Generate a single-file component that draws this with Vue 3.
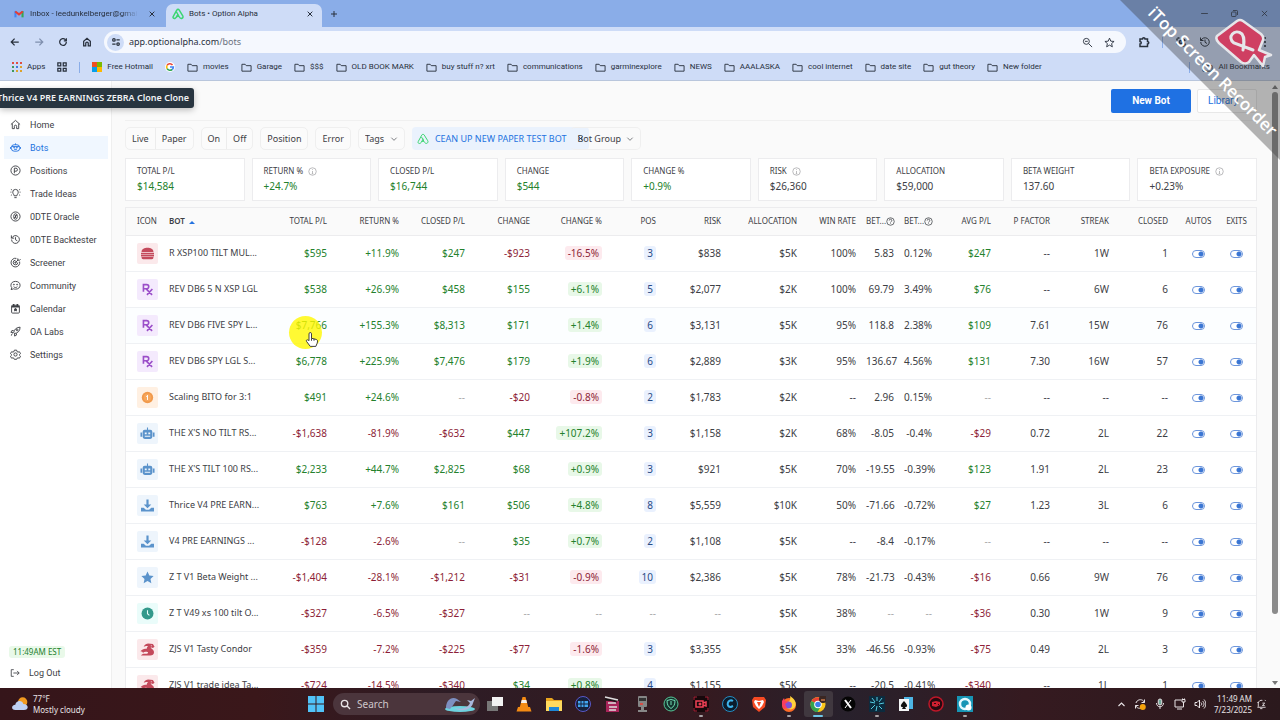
<script setup>
import { ref } from "vue";

// inner markup of the 24x24 line icons
const icons = {
  back: '<path d="M21 12H4M11 4l-8 8 8 8"/>',
  forward: '<path d="M3 12h17M13 4l8 8-8 8"/>',
  reload: '<path d="M20 12a8 8 0 1 1-2.5-5.8L20 9"/><path d="M20 3v6h-6"/>',
  house: '<path d="M4 21V10l8-7 8 7v11h-5v-6a3 3 0 0 0-6 0v6z"/>',
  site: '<circle cx="7" cy="7" r="3"/><path d="M13 7h8M3 17h8"/><circle cx="17" cy="17" r="3"/>',
  zoomOut: '<circle cx="9.500" cy="9.500" r="6.500"/><path d="M14.500 14.500L22 22M6.500 9.500h6"/>',
  star: '<path d="M12 2.500l2.800 6.600 7.200.6-5.400 4.700 1.600 7-6.200-3.700-6.200 3.700 1.600-7L2 9.700l7.200-.6z"/>',
  puzzle: '<path d="M4 6h5a2.500 2.500 0 0 1 5 0h5v5a2.500 2.500 0 0 1 0 5v5H4v-5a2.500 2.500 0 0 0 0-5z"/>',
  swirl: '<path d="M4 9V4h6M20 15v5h-6M4 14a8 8 0 0 0 4 5M20 10a8 8 0 0 0-5-6" stroke-dasharray="4 2"/><circle cx="12" cy="12" r="3"/>',
  history: '<path d="M3.500 12a8.500 8.500 0 1 0 2.500-6L3 9"/><path d="M3 3v6h6M12 7v5.500l4 2.500"/>',
  dots: '<g fill="currentColor" stroke="none"><circle cx="12" cy="4" r="2.200"/><circle cx="12" cy="12" r="2.200"/><circle cx="12" cy="20" r="2.200"/></g>',
  folder: '<path d="M2 5h7l2.500 3H22v12H2z"/>',
  close: '<path d="M5 5l14 14M19 5L5 19"/>',
  plus: '<path d="M12 3v18M3 12h18"/>',
  minus: '<path d="M3 12h18"/>',
  restore: '<rect x="4" y="8" width="12" height="12" rx="2"/><path d="M8 4h10a2 2 0 0 1 2 2v10"/>',
  chevron: '<path d="M4 8l8 8 8-8"/>',
  up: '<path d="M4 16l8-8 8 8"/>',
  alpha: '<path d="M12 2.500c-1 0-2 .7-2.500 1.700L2.500 17c-1.500 3 1.500 5 4 3.500 3-2 5-5 6-9M9 8l5 9c2 3.500 4 4.500 6 3.500s2.500-3 1.500-5l-7-11.300c-.6-1-1.500-1.700-2.500-1.700M8 16.500h6"/>',
  home: '<path d="M2 12l10-9 10 9M5 10v11h4.500v-5a2.500 2.500 0 0 1 5 0v5H19V10"/>',
  bots: '<rect x="3" y="6" width="18" height="14" rx="6"/><path d="M1 11v4M23 11v4M12 3v3M4 10h16M9 16h6"/><circle cx="9" cy="12.500" r="1"/><circle cx="15" cy="12.500" r="1"/>',
  positions: '<circle cx="12" cy="12" r="10"/><path d="M9.500 18V7H13a3 3 0 0 1 0 6.500H9.500"/>',
  ideas: '<path d="M9 17c0-3-3-4-3-8a6 6 0 0 1 12 0c0 4-3 5-3 8zM9.500 21h5M1 9h2M21 9h2M2 3l2 1M22 3l-2 1M2 16l2-1M22 16l-2-1"/>',
  oracle: '<circle cx="12" cy="12" r="10"/><ellipse cx="12" cy="12" rx="4" ry="6"/><path d="M12 9v6M15 8l-6 8"/>',
  screener: '<path d="M21 10a9.500 9.500 0 1 1-7-7M17 12a5 5 0 1 1-5-5M12 12l6-6M17 3v4h4l2-2"/><circle cx="12" cy="12" r="1.500"/>',
  community: '<path d="M12 3c6 0 10 3.500 10 8.500S18 20 12 20c-1.500 0-3-.2-4.300-.8L2.500 21l1.300-4.500C2.600 15 2 13.500 2 11.500 2 6.500 6 3 12 3zM8 14.500c2 2.500 6 2.500 8 0"/><circle cx="8.500" cy="10" r="1"/><circle cx="15.500" cy="10" r="1"/>',
  calendar: '<rect x="3.500" y="5" width="17" height="17" rx="2"/><path d="M3.500 8h17M8 2v4M16 2v4" stroke-width="3.500"/><path fill="currentColor" d="M12 11.500l1 2 2 .3-1.500 1.400.4 2.200-1.900-1-1.900 1 .4-2.200L9 13.800l2-.3z"/>',
  labs: '<path d="M8 15c1-7 5-12 14-12.500C22 11 17 15.500 9.500 16.500zM8 10H4l-2 4h5M14 16v4l-4 2v-5M3 21c0-3 1-4 3-4"/><circle cx="15.500" cy="8.500" r="2"/>',
  settings: '<circle cx="12" cy="12" r="3.500"/><path d="M9.500 2.500h5l.7 3 2.300 1.300 3-.9 2.500 4.200-2.300 2.200v1.400l2.300 2.200-2.500 4.200-3-.9-2.300 1.300-.7 2h-5l-.7-2-2.300-1.300-3 .9L1 15.900l2.300-2.200v-1.400L1 10.100l2.500-4.200 3 .9 2.300-1.300z"/>',
  logout: '<path d="M9 4H3v16h6M8 12h14M17 7l5 5-5 5"/>',
  info: '<circle cx="12" cy="12" r="10"/><path d="M12 10.500V18M12 6v2M10 18h4"/>',
  help: '<circle cx="12" cy="12" r="10"/><path d="M8.500 9.500a3.500 3.500 0 1 1 4.500 3.200c-.8.400-1 .8-1 1.800M12 17v1.500"/>',
  search: '<circle cx="10" cy="10" r="7"/><path d="M15.500 15.500L22 22"/>',
  sync: '<path d="M4 10a9 9 0 0 1 15-4l2 3M20 14a9 9 0 0 1-15 4l-2-3M21 3v6h-6M3 21v-6h6"/><circle cx="17.500" cy="18" r="6" fill="#f5a30b" stroke="none"/>',
  mic: '<rect x="8.500" y="2" width="7" height="12" rx="3.500" fill="#74a99b"/><path d="M5 10c0 10 14 10 14 0M12 18v4"/>',
  screen: '<path d="M15 4H2v14h17v-6M6 22h10"/><path d="M19 12V8M16 3v5h6V3zM17 1v2M21 1v2"/>',
  sound: '<path d="M2 9v6h4l5 5V4L6 9zM14 9c2 2 2 4 0 6M17 6c4 4 4 8 0 12M20 3c5 6 5 12 0 18"/>',
  bell: '<path d="M5 17V9a7 7 0 0 1 9-6M3 18h18M9 21h5M14 9h5l-5 5h5M19 2l2 2M5 9l-2-2"/>',
};

// filled pictures for the bot tiles
const tiles = {
  burger: '<path d="M1 9C1-1 23-1 23 9zM0 10.500h24v3H0zM0 14.500h24v3H0zM1 18.500h22c0 3-1 4-3 4H4c-2 0-3-1-3-4z"/>',
  rx: '<g fill="none" stroke="currentColor" stroke-width="3"><path d="M4.500 16V3h6a3.500 3.500 0 0 1 0 7.500h-6M9 10.500L20.500 22M21 11L11 22"/></g>',
  coin: '<circle cx="12" cy="12" r="10.500"/><circle cx="12" cy="12" r="7" fill="#f7a75c"/><path d="M12 7.500v9M9.500 10.500l2.500-2" stroke="#fff" stroke-width="1.800"/>',
  robot: '<path d="M11 1h2v4h4a4 4 0 0 1 4 4v9a4 4 0 0 1-4 4H7a4 4 0 0 1-4-4V9a4 4 0 0 1 4-4h4zM-1 10h3v8h-3zM22 10h3v8h-3z"/><path fill="#eef5fc" d="M7 10h3.500v3.500H7zM13.500 10H17v3.500h-3.500zM7 16h10v2H7z"/>',
  download: '<path d="M10 1h4v9h5l-7 7-7-7h5zM0 16h5l4 4h6l4-4h5v7H0z"/>',
  star: '<path d="M12 1l3.400 7.200 7.900 1-5.800 5.400 1.600 7.900-7.100-4-7.100 4 1.600-7.900L.7 9.200l7.900-1z"/>',
  clock: '<circle cx="12" cy="12" r="11"/><path d="M12 6v6.500l3.500 3" fill="none" stroke="#eafcfa" stroke-width="2"/>',
  dragon: '<path d="M13 1l9 1 3 5-3 2-4-1c0 3 6 4 6 9 0 4-3 6-7 6H0c2-3 5-4 8-3 4 0 5-1 5-3-4-1-7-1-9 1-1-1-2-3-5-3 3-3 7-5 11-4 1-2 1-4 3-5-3-1-6 1-8 1 1-3 3-5 8-6z"/><circle cx="19" cy="5" r="1" fill="#fbe9eb"/>',
};

const toolbarIcons = ["back", "forward", "reload", "house"];

const bookmarks = [
  "movies", "Garage", "$$$", "OLD BOOK MARK", "buy stuff n? xrt", "communications", "garminexplore",
  "NEWS", "AAALASKA", "cool internet", "date site", "gut theory", "New folder",
];

const menu = [
  { icon: "home", text: "Home" },
  { icon: "bots", text: "Bots", active: true },
  { icon: "positions", text: "Positions" },
  { icon: "ideas", text: "Trade Ideas" },
  { icon: "oracle", text: "0DTE Oracle" },
  { icon: "history", text: "0DTE Backtester" },
  { icon: "screener", text: "Screener" },
  { icon: "community", text: "Community" },
  { icon: "calendar", text: "Calendar" },
  { icon: "labs", text: "OA Labs" },
  { icon: "settings", text: "Settings" },
];

const cards = [
  { label: "TOTAL P/L", value: "$14,584", up: true },
  { label: "RETURN %", value: "+24.7%", up: true, info: true },
  { label: "CLOSED P/L", value: "$16,744", up: true },
  { label: "CHANGE", value: "$544", up: true },
  { label: "CHANGE %", value: "+0.9%", up: true },
  { label: "RISK", value: "$26,360", info: true },
  { label: "ALLOCATION", value: "$59,000" },
  { label: "BETA WEIGHT", value: "137.60" },
  { label: "BETA EXPOSURE", value: "+0.23%", info: true },
];

const columns = [
  { text: "TOTAL P/L", type: "money", width: 59 },
  { text: "RETURN %", type: "money", width: 72 },
  { text: "CLOSED P/L", type: "money", width: 66 },
  { text: "CHANGE", type: "money", width: 65 },
  { text: "CHANGE %", type: "change", width: 72 },
  { text: "POS", type: "pos", width: 54 },
  { text: "RISK", type: "risk", width: 65 },
  { text: "ALLOCATION", type: "plain", width: 76 },
  { text: "WIN RATE", type: "plain", width: 59 },
  { text: "BET...", type: "beta", width: 38 },
  { text: "BET...", type: "beta", width: 38 },
  { text: "AVG P/L", type: "money", width: 59 },
  { text: "P FACTOR", type: "plain", width: 59 },
  { text: "STREAK", type: "plain", width: 59 },
  { text: "CLOSED", type: "plain", width: 59 },
];

const bots = ref([
  { tile: "burger", color: "red", name: "R XSP100 TILT MUL...", values: ["$595", "+11.9%", "$247", "-$923", "-16.5%", "3", "$838", "$5K", "100%", "5.83", "0.12%", "$247", "--", "1W", "1"] },
  { tile: "rx", color: "purple", name: "REV DB6 5 N XSP LGL", values: ["$538", "+26.9%", "$458", "$155", "+6.1%", "5", "$2,077", "$2K", "100%", "69.79", "3.49%", "$76", "--", "6W", "6"] },
  { tile: "rx", color: "purple", name: "REV DB6 FIVE SPY L...", hover: true, values: ["$7,766", "+155.3%", "$8,313", "$171", "+1.4%", "6", "$3,131", "$5K", "95%", "118.8", "2.38%", "$109", "7.61", "15W", "76"] },
  { tile: "rx", color: "purple", name: "REV DB6 SPY LGL S...", values: ["$6,778", "+225.9%", "$7,476", "$179", "+1.9%", "6", "$2,889", "$3K", "95%", "136.67", "4.56%", "$131", "7.30", "16W", "57"] },
  { tile: "coin", color: "orange", name: "Scaling BITO for 3:1", values: ["$491", "+24.6%", "--", "-$20", "-0.8%", "2", "$1,783", "$2K", "--", "2.96", "0.15%", "--", "--", "--", "--"] },
  { tile: "robot", color: "blue", name: "THE X'S NO TILT RS...", values: ["-$1,638", "-81.9%", "-$632", "$447", "+107.2%", "3", "$1,158", "$2K", "68%", "-8.05", "-0.4%", "-$29", "0.72", "2L", "22"] },
  { tile: "robot", color: "blue", name: "THE X'S TILT 100 RS...", values: ["$2,233", "+44.7%", "$2,825", "$68", "+0.9%", "3", "$921", "$5K", "70%", "-19.55", "-0.39%", "$123", "1.91", "2L", "23"] },
  { tile: "download", color: "blue", name: "Thrice V4 PRE EARN...", values: ["$763", "+7.6%", "$161", "$506", "+4.8%", "8", "$5,559", "$10K", "50%", "-71.66", "-0.72%", "$27", "1.23", "3L", "6"] },
  { tile: "download", color: "blue", name: "V4 PRE EARNINGS ...", values: ["-$128", "-2.6%", "--", "$35", "+0.7%", "2", "$1,108", "$5K", "--", "-8.4", "-0.17%", "--", "--", "--", "--"] },
  { tile: "star", color: "blue", name: "Z T V1 Beta Weight ...", values: ["-$1,404", "-28.1%", "-$1,212", "-$31", "-0.9%", "10", "$2,386", "$5K", "78%", "-21.73", "-0.43%", "-$16", "0.66", "9W", "76"] },
  { tile: "clock", color: "teal", name: "Z T V49 xs 100 tilt O...", values: ["-$327", "-6.5%", "-$327", "--", "--", "--", "--", "$5K", "38%", "--", "--", "-$36", "0.30", "1W", "9"] },
  { tile: "dragon", color: "red", name: "ZJS V1 Tasty Condor", values: ["-$359", "-7.2%", "-$225", "-$77", "-1.6%", "3", "$3,355", "$5K", "33%", "-46.56", "-0.93%", "-$75", "0.49", "2L", "3"] },
  { tile: "dragon", color: "red", name: "ZJS V1 trade idea Ta...", values: ["-$724", "-14.5%", "-$340", "$34", "+0.8%", "4", "$1,155", "$5K", "--", "-20.5", "-0.41%", "-$340", "--", "1L", "1"] },
].map((bot) => ({ ...bot, autos: true, exits: true })));

const valueClass = (value, type) => {
  if (value === "--") return type === "plain" ? "" : "none";
  if (type === "money" || type === "change") {
    return [value.startsWith("-") ? "loss" : "gain", type === "change" ? "pill" : ""];
  }
  return type === "pos" ? "pill count" : "";
};

// pinned programs, drawn on a 16x16 grid
const apps = [
  { name: "Task view", art: '<path fill="#777" d="M0 5h11v10H0z"/><path fill="#f2f2f2" d="M5 1h11v9H5z"/>' },
  { name: "VLC", art: '<path fill="#f48b13" d="M6.500 1h3l3 11h-9z"/><path fill="#f5f0ea" d="M5.700 4h4.600l.8 3H4.900z"/><path fill="#f48b13" d="M2 11h12l1.500 4.500H.5z"/>' },
  { name: "File Explorer", art: '<path fill="#e9a51e" d="M0 2h6l2 2h8v11H0z"/><path fill="#ffda5e" d="M0 5h16v10H0z"/><path fill="#1e88d8" d="M3 11h10v4H3z"/>' },
  { name: "Media", art: '<circle cx="8" cy="8" r="7.500" fill="#16213c" stroke="#5959c9"/><path fill="#42a5f0" d="M3 5h10v6H3z"/><path stroke="#16213c" d="M6 5v6M9 5v6M3 8h10"/>' },
  { name: "Editor", art: '<path fill="#a82459" d="M2 5h13v11H2z"/><path stroke="#ddd" stroke-width="1.500" fill="none" d="M1 1l13 3M4 7h8M5 11h8M5 14h7"/><path stroke="#111" d="M1 3l12 3"/>' },
  { name: "Recorder", art: '<rect x="4" y="0" width="9" height="11" rx="1" fill="#858585"/><path fill="#333" d="M5 2h7v3H5z"/><path fill="#d64c46" d="M6 7h3v2H6z"/><path fill="#888" d="M7 11h3v3h3v2H4v-2h3z"/>' },
  { name: "Shield", art: '<circle cx="8" cy="8" r="7" fill="#15332d" stroke="#55c797"/><path fill="none" stroke="#72dfb5" d="M4 4.500l4-1 4 1c0 4-1 6-4 8-3-2-4-4-4-8zM8 5v4"/>' },
  { name: "Screen recorder", running: true, art: '<rect width="16" height="16" rx="3" fill="#17080b"/><path fill="none" stroke="#a92338" d="M1 4V1h3M12 1h3v3M1 12v3h3M12 15h3v-3"/><path fill="none" stroke="#ef4055" stroke-width="1.500" d="M3 5h7v6H3zM10 7l3-1v4l-3-1"/><circle cx="7" cy="8" r="1.500" fill="#ef4055"/>' },
  { name: "Cleaner", art: '<circle cx="8" cy="8" r="7.500" fill="#0b1c2c" stroke="#258dc2"/><path fill="none" stroke="#3eb4ed" stroke-width="2" d="M11 5c-5-3-8 6-2 6l2-1"/>' },
  { name: "Brave", art: '<path fill="#f64a23" d="M3 1h10l2 3-1 7-6 5-6-5-1-7z"/><path fill="#fff" d="M4 4l4 1 4-1 1 2-2 4-3 3-3-3-2-4z"/><path fill="#f64a23" d="M6 6h4L8 11z"/>' },
  { name: "Firefox", running: true, art: '<circle cx="8" cy="9" r="7" fill="#ff6b26"/><path fill="#ffd23c" d="M9 0c5 3 7 7 5 11-2 3-6 3-8 1l4-3-4-3c2 0 4-2 3-6z"/><circle cx="7.500" cy="9" r="3.500" fill="#8152d8"/><path fill="#fa3d62" d="M1 5l2-3 1 3 3 1-3 2 2 4-3 1C1 11 1 8 1 5z"/>' },
  { name: "Chrome", running: true, current: true, art: '<circle cx="8" cy="8.500" r="7.500" fill="#fbc61b"/><path fill="#e94235" d="M8 8.500L1.500 5A7.500 7.500 0 0 1 14.500 5z"/><path fill="#34a350" d="M8 8.500L1.500 5c-3 5 1 11 6 11l3-5z"/><circle cx="8" cy="8.500" r="3.800" fill="#fff"/><circle cx="8" cy="8.500" r="2.800" fill="#3e7ee8"/><circle cx="13" cy="3" r="4" fill="#3a2723"/><path fill="#a5623c" d="M11 3h4v2h-4z"/>' },
  { name: "X", art: '<circle cx="8" cy="8" r="7.500" fill="#050505"/><path stroke="#fff" stroke-width="2" d="M5 4l6 8"/><path stroke="#fff" d="M11 4l-6 8"/>' },
  { name: "Spark", running: true, art: '<path fill="#0c2b3e" d="M0 0h16v16H0z"/><path stroke="#54cbe2" d="M8 1v4M13 2l-3 4M15 7l-5 1M13 13l-3-3M7 15l1-5M2 13l4-4M1 6l5 1M3 2l3 4"/>' },
  { name: "Solitaire", art: '<path fill="#4db5e5" d="M6 1h9v12H6z"/><path fill="#f4f6f7" d="M1 3h10v12H1z"/><path fill="#111" d="M6 5c4 4 4 6 1 6l1 2H4l1-2c-3 0-3-2 1-6z"/>' },
  { name: "Game", art: '<circle cx="8" cy="8" r="7" fill="#26090f" stroke="#bd1728" stroke-width="1.500"/><path fill="#ce2031" d="M4 6l4-1 4 1v3l-4 2-4-1z"/><path fill="#26090f" d="M6 7h2v1H6zM10 8h1v1h-1z"/>' },
  { name: "Capture", running: true, art: '<path fill="#1795b5" d="M0 0h16v16H0z"/><circle cx="8" cy="8" r="5" fill="none" stroke="#e5f9ff" stroke-width="2.500"/><circle cx="11.500" cy="11.500" r="3" fill="#fff"/>' },
];
</script>

<template>
  <div class="desktop">
    <header class="browser">
      <div class="tabs">
        <div class="tab">
          <svg class="tab-icon" viewBox="0 0 24 24"><path fill="#4285f4" d="M1 5h5v15H1z" /><path fill="#34a853" d="M18 5h5v15h-5z" /><path fill="none" stroke="#e43d35" stroke-width="5" d="M3 6l9 7 9-7" /></svg>
          <span class="tab-title fade">Inbox - leedunkelberger@gmail</span>
          <button class="bare" aria-label="Close tab"><svg class="line heavy s8" viewBox="0 0 24 24" v-html="icons.close" /></button>
        </div>
        <div class="tab current">
          <svg class="line heavy alpha s12" viewBox="0 0 24 24" v-html="icons.alpha" />
          <span class="tab-title">Bots • Option Alpha</span>
          <button class="bare" aria-label="Close tab"><svg class="line heavy s8" viewBox="0 0 24 24" v-html="icons.close" /></button>
        </div>
        <button class="bare new-tab" aria-label="New tab"><svg class="line heavy s8" viewBox="0 0 24 24" v-html="icons.plus" /></button>
        <div class="window-buttons">
          <button v-for="name in ['minus', 'restore', 'close']" :key="name" class="bare" :aria-label="name"><svg class="line s9" viewBox="0 0 24 24" v-html="icons[name]" /></button>
        </div>
      </div>
      <div class="toolbar">
        <button v-for="name in toolbarIcons" :key="name" :class="['bare', 'nav-button', name]" :aria-label="name"><svg class="line heavy s10" viewBox="0 0 24 24" v-html="icons[name]" /></button>
        <div class="address">
          <span class="site"><svg class="line heavy s10" viewBox="0 0 24 24" v-html="icons.site" /></span>
          <span class="url">app.optionalpha.com<i>/bots</i></span>
          <svg class="line s11" viewBox="0 0 24 24" v-html="icons.zoomOut" />
          <svg class="line s11" viewBox="0 0 24 24" v-html="icons.star" />
        </div>
        <div class="extensions">
          <svg class="line heavy s12" viewBox="0 0 24 24" v-html="icons.puzzle" />
          <span class="divider"></span>
          <svg class="line heavy s12" viewBox="0 0 24 24" v-html="icons.swirl" />
          <svg class="line s12" viewBox="0 0 24 24" v-html="icons.history" />
          <span class="avatar"></span>
          <svg class="line s12" viewBox="0 0 24 24" v-html="icons.dots" />
        </div>
      </div>
      <nav class="bookmarks">
        <a href="#" class="apps-link">
          <svg class="s10" viewBox="0 0 10 10"><path fill="#de4d43" d="M0 0h2v2H0zM4 0h2v2H4zM8 0h2v2H8z" /><path fill="#3f9a5c" d="M0 4h2v2H0zM0 8h2v2H0z" /><path fill="#3f7de0" d="M4 4h2v2H4z" /><path fill="#dca22b" d="M8 4h2v2H8zM4 8h2v2H4zM8 8h2v2H8z" /></svg>
          Apps
        </a>
        <svg class="line heavy s10" viewBox="0 0 24 24"><path d="M2 2h7v7H2zM15 2h7v7h-7zM2 15h7v7H2zM15 15h7v7h-7z" /></svg>
        <span class="divider"></span>
        <a href="#">
          <svg class="s10" viewBox="0 0 10 10"><path fill="#f05022" d="M0 0h5v5H0z" /><path fill="#7dba00" d="M5 0h5v5H5z" /><path fill="#069fec" d="M0 5h5v5H0z" /><path fill="#fdb800" d="M5 5h5v5H5z" /></svg>
          Free Hotmail
        </a>
        <a href="#" aria-label="Google">
          <svg class="s10" viewBox="0 0 24 24"><circle cx="12" cy="12" r="12" fill="#fff" /><g fill="none" stroke-width="4"><path stroke="#e94235" d="M18 7A8 8 0 0 0 5 8" /><path stroke="#fbbc04" d="M5 8a8 8 0 0 0 0 8" /><path stroke="#34a853" d="M5 16a8 8 0 0 0 12 2" /><path stroke="#4285f4" d="M17 18c2-1 3-3 3-6h-8" /></g></svg>
        </a>
        <a v-for="name in bookmarks" :key="name" href="#">
          <svg class="line s11" viewBox="0 0 24 24" v-html="icons.folder" />
          {{ name }}
        </a>
        <span class="divider last"></span>
        <a href="#"><svg class="line s11" viewBox="0 0 24 24" v-html="icons.folder" />All Bookmarks</a>
      </nav>
    </header>

    <div class="page">
      <aside class="sidebar">
        <nav>
          <a v-for="item in menu" :key="item.text" href="#" :class="{ active: item.active }">
            <svg class="line s11" viewBox="0 0 24 24" v-html="icons[item.icon]" />
            {{ item.text }}
          </a>
        </nav>
        <div class="sidebar-foot">
          <span class="clock">11:49AM EST</span>
          <a href="#"><svg class="line s10" viewBox="0 0 24 24" v-html="icons.logout" />Log Out</a>
        </div>
      </aside>

      <main class="main">
        <div class="actions">
          <button class="new-bot">New Bot</button>
          <button class="library">Library</button>
        </div>

        <div class="filters">
          <div class="group"><button>Live</button><button>Paper</button></div>
          <div class="group"><button>On</button><button>Off</button></div>
          <div class="group"><button>Position</button></div>
          <div class="group"><button>Error</button></div>
          <label class="group drop">
            <select aria-label="Tags"><option>Tags</option></select>
            <svg class="line s8" viewBox="0 0 24 24" v-html="icons.chevron" />
          </label>
          <div class="chip-pair">
            <div class="chip">
              <svg class="line alpha s12" viewBox="0 0 24 24" v-html="icons.alpha" />
              <span>CEAN UP NEW PAPER TEST BOT</span>
              <button class="bare" aria-label="Remove"><svg class="line heavy s7" viewBox="0 0 24 24" v-html="icons.close" /></button>
            </div>
            <label class="group drop bot-group">
              <select aria-label="Bot Group"><option>Bot Group</option></select>
              <svg class="line s8" viewBox="0 0 24 24" v-html="icons.chevron" />
            </label>
          </div>
        </div>

        <div class="cards">
          <div v-for="card in cards" :key="card.label" class="card">
            <div class="card-label">{{ card.label }}<svg v-if="card.info" class="line s9" viewBox="0 0 24 24" v-html="icons.info" /></div>
            <div :class="['card-value', { gain: card.up }]">{{ card.value }}</div>
          </div>
        </div>

        <div class="table-box">
          <table>
            <colgroup>
              <col :style="{ width: '43px' }" />
              <col :style="{ width: '99px' }" />
              <col v-for="(column, i) in columns" :key="i" :style="{ width: column.width + 'px' }" />
              <col :style="{ width: '49px' }" />
              <col :style="{ width: '39px' }" />
            </colgroup>
            <thead>
              <tr>
                <th class="icon-cell">ICON</th>
                <th class="name-cell sorted">BOT <i class="sort"></i></th>
                <th v-for="(column, i) in columns" :key="i" :class="'col-' + column.type">
                  {{ column.text }}<svg v-if="column.type === 'beta'" class="line s9" viewBox="0 0 24 24" v-html="icons.help" />
                </th>
                <th class="toggle-cell autos">AUTOS</th>
                <th class="toggle-cell">EXITS</th>
              </tr>
            </thead>
            <tbody>
              <tr v-for="bot in bots" :key="bot.name" :class="{ hover: bot.hover }">
                <td class="icon-cell"><span :class="['tile', bot.color]"><svg viewBox="0 0 24 24" v-html="tiles[bot.tile]" /></span></td>
                <td class="name-cell">{{ bot.name }}</td>
                <td v-for="(value, i) in bot.values" :key="i" :class="'col-' + columns[i].type">
                  <span :class="valueClass(value, columns[i].type)">{{ value }}</span>
                </td>
                <td class="toggle-cell autos"><input v-model="bot.autos" type="checkbox" :aria-label="bot.name + ' autos'" /></td>
                <td class="toggle-cell"><input v-model="bot.exits" type="checkbox" :aria-label="bot.name + ' exits'" /></td>
              </tr>
            </tbody>
          </table>
        </div>
      </main>

      <div class="scrollbar"><i class="arrow-up"></i><div class="track"><div class="thumb"></div></div><i class="arrow-down"></i></div>

      <div class="tooltip"><span>Thrice V4 PRE EARNINGS ZEBRA Clone Clone</span></div>
      <div class="pointer">
        <svg viewBox="0 0 24 24"><path fill="#fff" stroke="#333" stroke-width="1.500" d="M8 14V3c0-3 4-3 4 0v7l8 2c2 1 2 3 1 6l-2 5h-9l-6-8c-1-2 1-4 4-1zM12 10v4M16 11v3" /></svg>
      </div>
    </div>

    <footer class="taskbar">
      <div class="weather">
        <svg viewBox="0 0 24 24"><circle cx="16" cy="9" r="7" fill="#f29a20" /><path fill="#bfd0f3" d="M5 21c-7 0-6-8 0-8 1-7 11-7 12-1 8 0 9 9 1 9z" /></svg>
        <div>77°F<br />Mostly cloudy</div>
      </div>
      <div class="task-center">
        <button class="bare start" aria-label="Start"><svg viewBox="0 0 16 16"><path fill="#51c3f8" d="M0 0h7.500v7.500H0zM8.500 0H16v7.500H8.500zM0 8.500h7.500V16H0zM8.500 8.500H16V16H8.500z" /></svg></button>
        <label class="task-search">
          <svg class="line heavy s11" viewBox="0 0 24 24" v-html="icons.search" />
          <input type="text" placeholder="Search" aria-label="Search" />
          <svg class="dolphin" viewBox="0 0 32 16"><ellipse cx="16" cy="13" rx="15" ry="3" fill="#6dd3df" /><path fill="#7d8fc0" d="M2 12c0-7 5-12 11-9l4 3-5-1c-2 2-3 5-6 8z" /><path fill="#a9b9dd" d="M10 12c7 2 14 0 16-5l-3-3 4 1 4-3-2 5c-1 6-10 10-19 5z" /></svg>
        </label>
        <div class="pinned">
          <button v-for="app in apps" :key="app.name" :class="['bare', { running: app.running, current: app.current }]" :aria-label="app.name">
            <svg viewBox="0 0 16 16" v-html="app.art" />
          </button>
        </div>
      </div>
      <div class="tray">
        <svg class="line heavy s9" viewBox="0 0 24 24" v-html="icons.up" />
        <svg class="line s12" viewBox="0 0 24 24" v-html="icons.sync" />
        <svg class="line s12" viewBox="0 0 24 24" v-html="icons.mic" />
        <svg class="line s12" viewBox="0 0 24 24" v-html="icons.screen" />
        <svg class="line s12" viewBox="0 0 24 24" v-html="icons.sound" />
        <div class="time">11:49 AM<br />7/23/2025</div>
        <svg class="line s11" viewBox="0 0 24 24" v-html="icons.bell" />
      </div>
    </footer>

    <svg class="ribbon" viewBox="0 0 160 160">
      <path d="M0 0h160v160z" fill="#333" fill-opacity=".36" />
      <g transform="translate(120 43)">
        <path fill="#cf3f62" stroke="#e6e6ea" stroke-width="2.500" stroke-linejoin="round" d="M-3-22Q0-24 3-22L21-9Q24-6 23-3l-4 10 12 5-6 2-2 9-9-11-5 7Q5 22 1 19l-22-19q-4-4-2-7z" />
        <path fill="none" stroke="#e6e6ea" stroke-width="3" stroke-linecap="round" d="M13 7L-6 0c-8-6 1-15 8-9 3 4 2 10 1 16" />
      </g>
      <text transform="translate(27 14) rotate(45)">iTop Screen Recorder</text>
    </svg>
  </div>
</template>

<style>
body {
  margin: 0;
  overflow: hidden;
}
</style>

<style scoped>
.desktop {
  position: relative;
  display: flex;
  flex-direction: column;
  height: 100vh;
  overflow: hidden;
  font-family: "Noto Sans", sans-serif;
  font-size: 10px;
  line-height: 12px;
  color: #3d4045;
  background: #fafafa;
}

.desktop * {
  box-sizing: border-box;
}

svg {
  display: block;
  flex: none;
}

a {
  color: inherit;
  text-decoration: none;
}

button,
select,
input {
  font: inherit;
  color: inherit;
}

.bare {
  display: flex;
  align-items: center;
  justify-content: center;
  padding: 0;
  border: 0;
  background: none;
}

.line {
  fill: none;
  stroke: currentColor;
  stroke-width: 2;
}

.heavy {
  stroke-width: 3;
}

.s7 { width: 7px; height: 7px; }
.s8 { width: 8px; height: 8px; }
.s9 { width: 9px; height: 9px; }
.s10 { width: 10px; height: 10px; }
.s11 { width: 11px; height: 11px; }
.s12 { width: 12px; height: 12px; }

.alpha {
  color: #3bd671;
}

/* Browser */
.browser {
  flex: none;
  height: 81px;
  background: #cedcf7;
  border-bottom: 1px solid #b9c6dc;
  color: #28303d;
  font-family: Roboto, sans-serif;
  font-size: 8px;
}

.tabs {
  display: flex;
  align-items: center;
  height: 27px;
  background: #8aade8;
}

.tab {
  display: flex;
  align-items: center;
  gap: 6px;
  width: 166px;
  height: 23px;
  margin-top: 4px;
  padding: 0 10px 4px 14px;
}

.tab.current {
  width: 156px;
  padding: 0 8px 4px 6px;
  gap: 5px;
  border-radius: 7px 7px 0 0;
  background: #cedcf7;
}

.tab-icon {
  width: 10px;
  height: 10px;
}

.tab-title {
  flex: 1;
  overflow: hidden;
  white-space: nowrap;
}

.fade {
  margin-right: 4px;
  mask-image: linear-gradient(90deg, #000 85%, transparent);
}

.new-tab {
  margin-left: 8px;
}

.window-buttons {
  display: flex;
  gap: 21px;
  margin-left: auto;
  padding-right: 11px;
}

.toolbar {
  display: flex;
  align-items: center;
  height: 30px;
}

.nav-button {
  width: 24px;
  height: 24px;
}

.nav-button.back {
  margin-left: 3px;
}

.nav-button.forward {
  color: #7f8fae;
}

.nav-button.house {
  margin-right: 5px;
}

.address {
  display: flex;
  flex: 1;
  align-items: center;
  gap: 11px;
  height: 22px;
  padding: 0 11px 0 3px;
  border-radius: 11px;
  background: #f5f8fe;
}

.site {
  display: flex;
  align-items: center;
  justify-content: center;
  width: 17px;
  height: 17px;
  border-radius: 50%;
  background: #cedcf7;
}

.url {
  flex: 1;
  margin-left: -6px;
  font-family: "Noto Sans", sans-serif;
  font-size: 9px;
}

.url i {
  font-style: normal;
  color: #6b727e;
}

.extensions {
  display: flex;
  align-items: center;
  gap: 12px;
  margin-left: 12px;
  padding-right: 9px;
}

.divider {
  width: 1px;
  height: 11px;
  background: #8aade8;
}

.avatar {
  width: 14px;
  height: 14px;
  margin: 0 -2px 0 12px;
  border-radius: 50%;
  background: #b52f36;
}

.bookmarks {
  display: flex;
  align-items: center;
  gap: 12px;
  height: 20px;
  padding: 0 10px 0 12px;
  white-space: nowrap;
}

.bookmarks a {
  display: flex;
  align-items: center;
  gap: 5px;
}

.bookmarks .divider.last {
  margin-left: auto;
}

/* Page */
.page {
  position: relative;
  display: flex;
  flex: 1;
  min-height: 0;
  overflow: hidden;
}

.sidebar {
  display: flex;
  flex: none;
  flex-direction: column;
  width: 112px;
  padding: 32px 3px 4px 4px;
  border-right: 1px solid #efefef;
  background: #fff;
}

.sidebar a {
  display: flex;
  align-items: center;
  gap: 9px;
  height: 23px;
  padding-left: 6px;
  white-space: nowrap;
  font-family: Roboto, sans-serif;
  font-size: 9px;
}

.sidebar a.active {
  background: #f0f7ff;
  color: #2473e0;
}

.sidebar-foot {
  display: flex;
  flex-direction: column;
  align-items: flex-start;
  gap: 3px;
  margin-top: auto;
}

.clock {
  margin-left: 5px;
  padding: 0 4px;
  border-radius: 3px;
  background: #e9f9e9;
  color: #22802b;
  font-size: 8px;
  white-space: nowrap;
}

.main {
  display: flex;
  flex: 1;
  flex-direction: column;
  min-width: 0;
  padding: 0 13px;
}

.actions {
  display: flex;
  flex: none;
  gap: 6px;
  justify-content: flex-end;
  height: 40px;
  padding-top: 8px;
  border-bottom: 1px solid #f0f0f0;
  font-family: Roboto, sans-serif;
}

.actions button {
  height: 24px;
  padding: 0;
  border-radius: 2px;
}

.new-bot {
  width: 80px;
  border: 0;
  background: #1f71e3;
  color: #fff;
  font-weight: 700;
}

.actions .library {
  width: 60px;
  padding-left: 10px;
  border: 1px solid #e8e8e8;
  background: #fff;
  color: #2473e0;
  text-align: left;
}

.filters {
  display: flex;
  flex: none;
  gap: 7px;
  margin: 6px 0 8px;
  font-size: 9px;
  white-space: nowrap;
}

.group {
  display: flex;
  align-items: center;
  height: 23px;
  border: 1px solid #efefef;
  border-radius: 5px;
  background: #fbfbfb;
}

.group button {
  height: 21px;
  padding: 0 6px;
  border: 0;
  background: none;
}

.group button + button {
  border-left: 1px solid #ececec;
}

.drop {
  gap: 5px;
  padding: 0 6px;
}

.drop select {
  padding: 0;
  border: 0;
  appearance: none;
  background: none;
}

.chip-pair {
  display: flex;
}

.chip {
  display: flex;
  align-items: center;
  gap: 6px;
  height: 23px;
  padding: 0 5px;
  border-radius: 4px;
  background: #eaf2fd;
  color: #2473e0;
}

.chip button {
  margin-left: 5px;
  color: #2b569b;
}

.bot-group {
  margin-left: -19px;
  border-left-color: transparent;
  background: none;
}

.cards {
  display: grid;
  flex: none;
  grid-template-columns: repeat(9, 1fr);
  gap: 7px;
}

.card {
  height: 43px;
  padding: 6px 11px 0;
  border: 1px solid #ececee;
  background: #fff;
}

.card-label {
  display: flex;
  align-items: center;
  gap: 5px;
  height: 12px;
  font-size: 8px;
  white-space: nowrap;
}

.card-label svg {
  color: #a5a5a8;
}

.card-value {
  margin-top: 3px;
}

.gain {
  color: #24812c;
}

.loss {
  color: #8d1f38;
}

.none {
  color: #aaa;
}

.table-box {
  flex: 1;
  min-height: 0;
  margin-top: 6px;
  overflow: hidden;
  border: 1px solid #ececee;
  border-bottom: 0;
  background: #fff;
}

table {
  width: 100%;
  border-collapse: collapse;
  table-layout: fixed;
}

th,
td {
  padding: 0;
  text-align: right;
  white-space: nowrap;
}

th {
  height: 27px;
  border-bottom: 1px solid #ececee;
  background: #fafafa;
  font-size: 8px;
  font-weight: 400;
}

td {
  height: 36px;
  padding-bottom: 1px;
  border-bottom: 1px solid #eff1f4;
}

tr.hover {
  background: #fcfeff;
}

.icon-cell,
.name-cell {
  text-align: left;
}

td.name-cell {
  font-size: 9px;
}

.icon-cell {
  padding-left: 11px;
}

.sorted {
  font-weight: 600;
}

.sort {
  display: inline-block;
  margin-left: 2px;
  border: 3px solid transparent;
  border-top: 0;
  border-bottom-color: #2473e0;
  vertical-align: middle;
}

.col-beta {
  padding-left: 10px;
}

.col-beta svg {
  display: inline-block;
  vertical-align: -2px;
}

.toggle-cell {
  text-align: center;
}

.autos {
  padding-left: 12px;
}

.pill {
  display: inline-block;
  padding: 1px 3px;
  border-radius: 3px;
}

.pill.gain {
  background: #e8f8e8;
}

.pill.loss {
  background: #fdeaee;
}

.pill.count {
  background: #eaf1fe;
  color: #284b86;
}

.tile {
  display: flex;
  align-items: center;
  justify-content: center;
  width: 21px;
  height: 21px;
  margin-top: 1px;
  border-radius: 2px;
}

.tile svg {
  width: 13px;
  height: 13px;
  overflow: visible;
  fill: currentColor;
}

.tile.red { background: #fbe9eb; color: #c44a5c; }
.tile.purple { background: #f4eafd; color: #9b4fc9; }
.tile.orange { background: #fff0e2; color: #f19a4c; }
.tile.blue { background: #eef5fc; color: #5b93cb; }
.tile.teal { background: #eafcfa; color: #33998b; }

.toggle-cell input {
  display: block;
  width: 13px;
  height: 8px;
  margin: 2px auto 0;
  border: 1px solid #6d96dc;
  border-radius: 4px;
  appearance: none;
  background: #fff;
}

.toggle-cell input:checked {
  background: radial-gradient(circle at 8px 3px, #3b76d3 2px, #fff 3px);
}

.scrollbar {
  display: flex;
  flex: none;
  flex-direction: column;
  align-items: center;
  width: 10px;
  padding: 4px 0 3px;
}

.track {
  flex: 1;
  margin: 3px 0;
}

.thumb {
  width: 6px;
  height: 89%;
  border-radius: 3px;
  background: #8a8a8a;
}

.arrow-up,
.arrow-down {
  border: 3px solid transparent;
}

.arrow-up {
  border-top: 0;
  border-bottom: 4px solid #777;
}

.arrow-down {
  border-bottom: 0;
  border-top: 4px solid #777;
}

.tooltip {
  position: absolute;
  top: 7px;
  left: 0;
  display: flex;
  justify-content: flex-end;
  align-items: center;
  width: 194px;
  height: 20px;
  padding-right: 5px;
  overflow: hidden;
  border-radius: 0 3px 3px 0;
  background: #283540;
  box-shadow: 0 2px 6px rgba(0, 0, 0, 0.25);
  color: #f1f3f5;
  font-size: 9px;
  font-weight: 600;
  white-space: nowrap;
}

.pointer {
  position: absolute;
  top: 235px;
  left: 289px;
  width: 33px;
  height: 33px;
  border-radius: 50%;
  background: rgba(255, 247, 0, 0.8);
}

.pointer svg {
  width: 15px;
  height: 15px;
  margin: 16px 0 0 15px;
}

/* Taskbar */
.taskbar {
  display: grid;
  flex: none;
  grid-template-columns: 1fr auto 1fr;
  align-items: center;
  height: 32px;
  background: linear-gradient(90deg, #35151a, #3a171a 20%, #2d1c25 35%, #351a20 55%, #28212c 66%, #351a20 80%, #2b191d);
  color: #e9e4e6;
  font-size: 8px;
  line-height: 11px;
}

.weather {
  display: flex;
  align-items: center;
  gap: 5px;
  padding-left: 12px;
}

.weather svg {
  width: 16px;
  height: 16px;
}

.task-center {
  display: flex;
  align-items: center;
  margin-left: 2px;
}

.start {
  width: 28px;
}

.start svg,
.pinned svg {
  width: 16px;
  height: 16px;
}

.task-search {
  display: flex;
  align-items: center;
  width: 147px;
  height: 22px;
  margin-left: 3px;
  padding: 0 4px 0 7px;
  border-radius: 11px;
  background: #4b353c;
}

.task-search input {
  flex: 1;
  min-width: 0;
  padding: 0 0 0 6px;
  border: 0;
  background: none;
  font-size: 10px;
}

.task-search input::placeholder {
  color: #cfc6ca;
}

.dolphin {
  width: 32px;
  height: 16px;
}

.pinned {
  display: grid;
  grid-template-columns: repeat(17, 1fr);
  width: 500px;
}

.pinned button {
  position: relative;
  height: 26px;
  border-radius: 3px;
}

.pinned .current {
  background: #40383f;
}

.pinned .running::after {
  content: "";
  position: absolute;
  bottom: 0;
  left: 50%;
  width: 4px;
  height: 2px;
  margin-left: -2px;
  border-radius: 1px;
  background: #a9a3a6;
}

.pinned .current::after {
  width: 10px;
  margin-left: -5px;
  background: #6ec6e8;
}

.tray {
  display: flex;
  align-items: center;
  justify-content: flex-end;
  gap: 8px;
  padding-right: 13px;
}

.time {
  margin-right: -4px;
  text-align: right;
}

.ribbon {
  position: absolute;
  top: 0;
  right: 0;
  width: 160px;
  height: 160px;
  pointer-events: none;
}

.ribbon text {
  fill: #fff;
  font-family: "Open Sans", sans-serif;
  font-size: 17px;
  font-weight: 600;
}
</style>
